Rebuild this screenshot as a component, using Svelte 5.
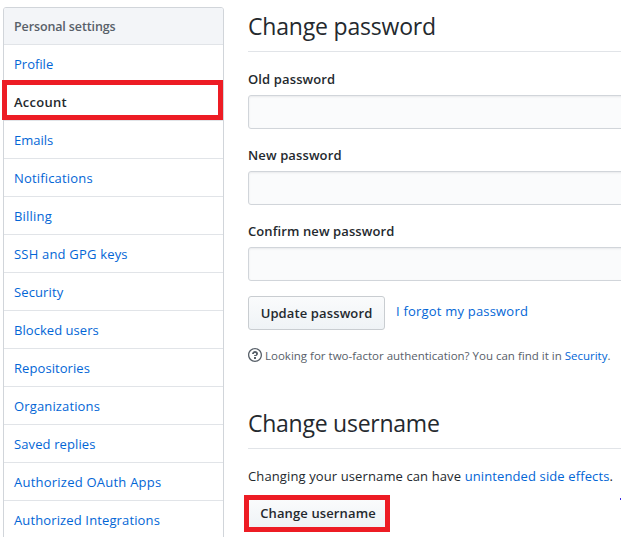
<script>
  const items = [
    { label: 'Profile', ls: 0 },
    { label: 'Account', ls: 0.25, selected: true },
    { label: 'Emails', ls: 0 },
    { label: 'Notifications', ls: 0.17 },
    { label: 'Billing', ls: 0.22 },
    { label: 'SSH and GPG keys', ls: 0.19 },
    { label: 'Security', ls: 0.12 },
    { label: 'Blocked users', ls: 0.05 },
    { label: 'Repositories', ls: 0.07 },
    { label: 'Organizations', ls: 0.14 },
    { label: 'Saved replies', ls: 0.11 },
    { label: 'Authorized OAuth Apps', ls: 0.23 },
    { label: 'Authorized Integrations', ls: 0.13 }
  ];
  const fields = [
    { id: 'old', label: 'Old password', ls: 0.12 },
    { id: 'new', label: 'New password', ls: 0.12 },
    { id: 'confirm', label: 'Confirm new password', ls: 0.1 }
  ];
</script>

<div class="page">
  <nav class="menu">
    <span class="menu-heading">Personal settings</span>
    {#each items as item}
      <a class="menu-item" class:selected={item.selected} href="#top"><span style="letter-spacing: {item.ls}px">{item.label}</span></a>
    {/each}
  </nav>

  <main>
    <h2>Change password</h2>
    <form>
      {#each fields as field}
        <label for={field.id}><span style="letter-spacing: {field.ls}px">{field.label}</span></label>
        <input id={field.id} type="password" />
      {/each}
      <div class="actions">
        <button type="button" class="btn"><span>Update password</span></button>
        <a class="forgot" href="#top"><span>I forgot my password</span></a>
      </div>
      <p class="note">
        <svg width="14" height="16" viewBox="0 0 14 16" aria-hidden="true"><path fill-rule="evenodd" d="M6 10h2v2H6v-2zm4-3.5C10 8.64 8 9 8 9H6c0-.55.45-1 1-1h.5c.28 0 .5-.22.5-.5v-1c0-.28-.22-.5-.5-.5h-1c-.28 0-.5.22-.5.5V7H4c0-1.500 1.500-3 3-3s3 1 3 2.500zM7 2.300c3.140 0 5.700 2.560 5.700 5.700s-2.560 5.700-5.700 5.700A5.710 5.710 0 0 1 1.300 8c0-3.140 2.560-5.700 5.700-5.700zM7 1C3.140 1 0 4.140 0 8s3.140 7 7 7 7-3.140 7-7-3.140-7-7-7z" /></svg>
        <span>Looking for two-factor authentication? You can find it in <a href="#top">Security</a>.</span>
      </p>
    </form>

    <h2 class="second">Change username</h2>
    <p class="warn"><span>Changing your username can have <a href="#top">unintended side effects</a>.</span></p>
    <button type="button" class="btn marked"><span>Change username</span></button>
  </main>
  <i class="speck"></i>
</div>

<style>
  :global(body) { margin: 0; background: #fff; overflow: hidden; }
  .page {
    position: relative; display: flex; align-items: flex-start;
    width: 621px; height: 537px; overflow: hidden; box-sizing: border-box;
    padding: 7px 0 0 3px;
    font: 13px/20px "Open Sans", sans-serif; color: #24292e;
  }
  a { color: #0366d6; text-decoration: none; }
  span { white-space: nowrap; }
  .menu {
    width: 221px; height: 600px; flex: none; box-sizing: border-box;
    border: 1px solid #d1d5da; border-radius: 3px; overflow: visible;
  }
  .menu-heading {
    display: block; height: 36px; line-height: 37px; padding-left: 10px;
    background: #f3f5f8; border-bottom: 1px solid #e1e4e8; color: #586069;
    font-size: 12.500px; font-weight: 550; letter-spacing: -0.12px; border-radius: 2px 2px 0 0;
  }
  .menu-item {
    display: block; position: relative; height: 37px; line-height: 38px;
    padding-left: 10px; border-bottom: 1px solid #e1e4e8;
  }
  .menu-item.selected { color: #24292e; font-weight: 550; }
  .selected::after {
    content: ""; position: absolute; left: -2px; top: -3px; width: 221px; height: 40px;
    box-sizing: border-box; border: 5px solid #ed1c24;
  }
  main { flex: 1; margin-left: 24px; min-width: 0; }
  h2 {
    margin: 0; height: 44px; line-height: 39px; box-sizing: content-box;
    border-bottom: 1px solid #e1e4e8; font-size: 23px; font-weight: 400; white-space: nowrap;
    letter-spacing: -0.19px;
  }
  form { padding-top: 17px; height: 318px; box-sizing: border-box; }
  label { display: block; height: 26px; line-height: 20px; font-weight: 550; }
  input {
    display: block; width: 440px; height: 34px; box-sizing: border-box; margin: 0 0 16px;
    border: 1px solid #d1d5da; border-radius: 3px; background: #fafbfc;
    box-shadow: inset 0 1px 2px rgba(27, 31, 35, 0.075);
  }
  .actions { display: flex; margin-top: -1px; }
  .btn {
    width: 137px; height: 34px; box-sizing: border-box; padding: 0; text-align: center;
    border: 1px solid #c9cdd1; border-radius: 3px; color: #24292e;
    background: linear-gradient(#fafbfc, #eff3f6);
    font: 550 13px/20px "Open Sans", sans-serif; letter-spacing: 0.12px;
  }
  .forgot { margin-left: 11px; line-height: 31px; letter-spacing: 0.2px; }
  .note {
    display: flex; align-items: center; gap: 3px; margin: 17px 0 0; height: 18px;
    font-size: 11.500px; line-height: 18px; color: #586069;
  }
  .note svg { fill: #586069; flex: none; margin-top: -2px; }
  .second { height: 78px; line-height: 107px; letter-spacing: -0.25px; }
  .warn { margin: 17px 0 0; line-height: 20px; height: 29px; letter-spacing: 0.115px; }
  .marked {
    display: block; margin-left: -4px; width: 146px; height: 37px; padding: 0 0 1px 2px;
    border: 5px solid #ed1c24; border-radius: 0;
  }
  .speck { position: absolute; left: 620px; top: 498px; width: 1px; height: 2px; background: #3a2be8; }
</style>
